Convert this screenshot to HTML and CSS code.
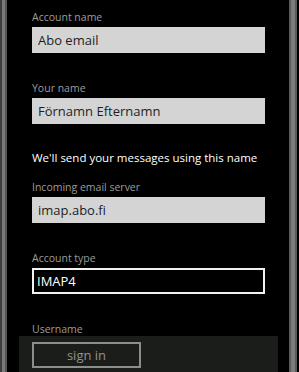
FILE: index.html
```html
<!DOCTYPE html>
<html lang="en">
<head>
  <meta charset="UTF-8" />
  <meta name="viewport" content="width=device-width, initial-scale=1.0" />
  <title>Account setup</title>
  <link rel="stylesheet" href="styles.css">
</head>
<body>
  <div class="phone">
    <div class="borda-esq"></div>
    <div class="conteudo">
      <div class="campo">
        <label class="campo-label">Account name</label>
        <div class="caixa">Abo email</div>
      </div>
      <div class="campo">
        <label class="campo-label">Your name</label>
        <div class="caixa">Förnamn Efternamn</div>
      </div>
      <p class="aviso">We'll send your messages using this name</p>
      <div class="campo">
        <label class="campo-label">Incoming email server</label>
        <div class="caixa">imap.abo.fi</div>
      </div>
      <div class="campo">
        <label class="campo-label">Account type</label>
        <div class="caixa caixa-escura">IMAP4</div>
      </div>
      <div class="campo">
        <label class="campo-label">Username</label>
      </div>
    </div>
    <div class="borda-dir"></div>

    <div class="barra-app">
      <button class="botao">sign in</button>
    </div>
  </div>
</body>
</html>
```

FILE: styles.css
```css
body {
  margin: 0;
  background: #000;
  font-family: 'Open Sans', 'Noto Sans', sans-serif;
  overflow: hidden;
}

.phone {
  position: relative;
  display: flex;
  width: 299px;
  height: 372px;
  background: #000;
}

.borda-esq {
  width: 7px;
  flex-shrink: 0;
  background: linear-gradient(to right, #3e3e3e 0, #3e3e3e 2px, #7a7a7a 2px, #7a7a7a 5px, #555 5px);
}

.conteudo {
  width: 282px;
  padding: 10px 0 0 25px;
  box-sizing: border-box;
}

.borda-dir {
  width: 8px;
  margin-right: 2px;
  flex-shrink: 0;
  background: linear-gradient(to right, #5a5a5a 0, #5a5a5a 2px, #7c7c7c 2px, #7c7c7c 6px, #5a5a5a 6px);
}

.campo {
  margin-bottom: 28px;
}

.campo-label {
  display: block;
  font-size: 10.5px;
  line-height: 14px;
  height: 14px;
  color: #9c9c9c;
  margin-bottom: 3px;
}

.caixa {
  width: 233px;
  height: 26px;
  box-sizing: border-box;
  background: #d4d4d4;
  color: #1e1e1e;
  font-size: 13px;
  line-height: 26px;
  padding-left: 6px;
}

.caixa-escura {
  background: #000;
  border: 2px solid #f2f2f2;
  color: #fff;
  line-height: 22px;
  padding-left: 3px;
}

.aviso {
  margin: -2px 0 14px;
  font-size: 11.5px;
  line-height: 16px;
  color: #fff;
}

.barra-app {
  position: absolute;
  left: 19px;
  bottom: 0;
  width: 259px;
  height: 36px;
  background: #1a1d1a;
  padding: 6px 0 0 13px;
  box-sizing: border-box;
}

.botao {
  width: 109px;
  height: 26px;
  background: transparent;
  border: 2px solid #8a8f8a;
  color: #8f938f;
  font-family: 'Open Sans', 'Noto Sans', sans-serif;
  font-size: 13px;
  line-height: 20px;
  padding: 0;
}
```
